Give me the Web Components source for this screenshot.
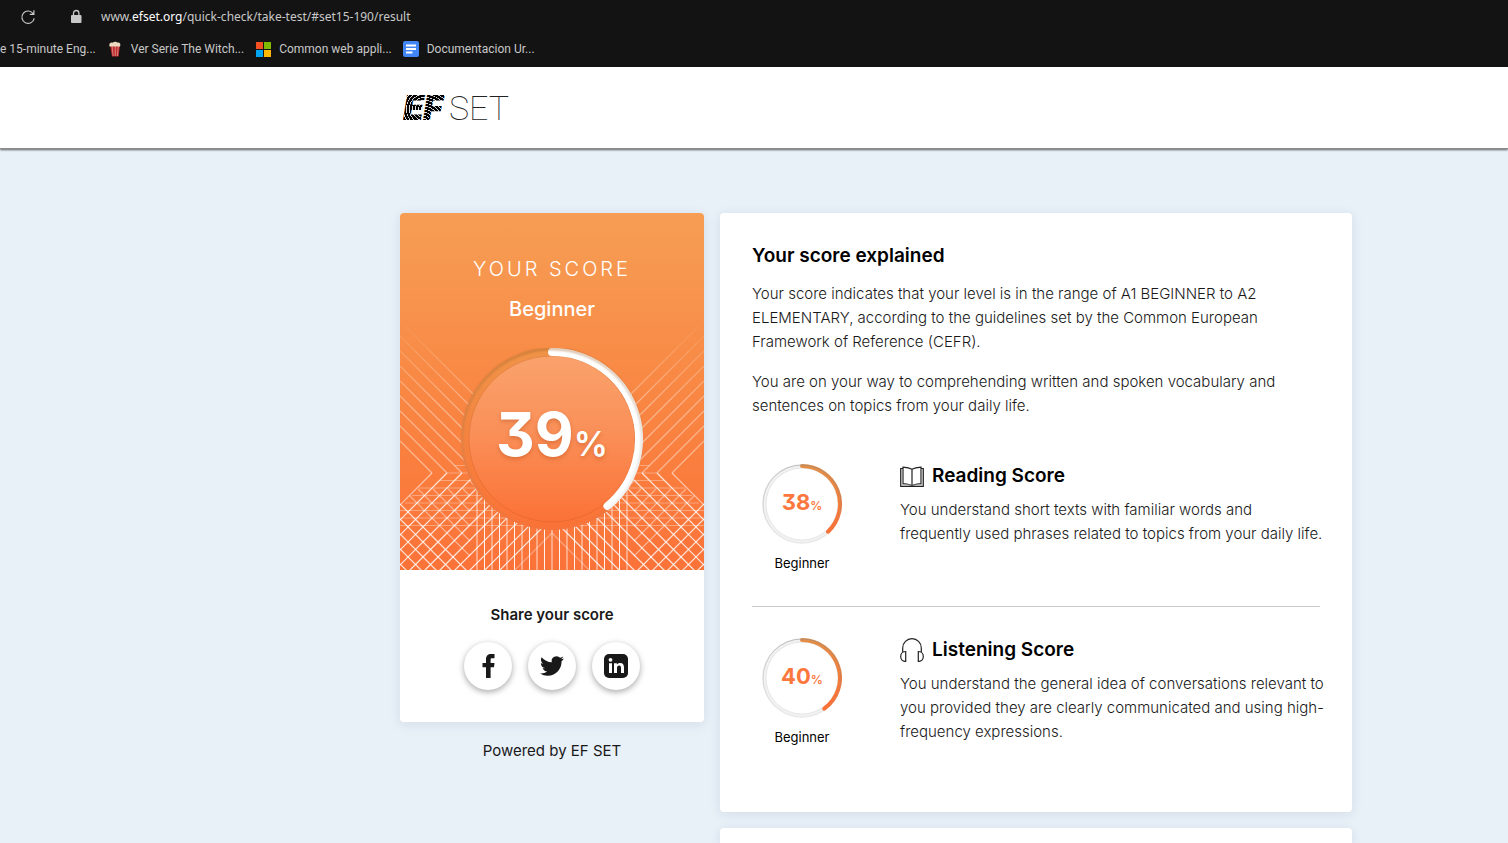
<!DOCTYPE html>
<html lang="en">
<head>
<meta charset="utf-8">
<title>EF SET Quick Check – Result</title>
<style>
  body { margin: 0; font-family: Inter, "Open Sans", sans-serif; font-size: 15px; line-height: 24px; color: #191919; }
</style>
</head>
<body>
<result-page></result-page>

<template id="browser-bar">
  <style>
    :host { display: block; background: #131313; color: #c8c8c8; font-size: 12px; overflow: hidden; }
    .address { display: flex; align-items: center; height: 33px; padding-left: 20px; font-family: "Noto Sans", sans-serif; }
    button { display: flex; padding: 0; border: 0; background: none; color: inherit; }
    .lock { margin: 0 17px 0 32px; }
    b { font-weight: 400; color: #fff; }
    nav { display: flex; align-items: center; gap: 11px; height: 32px; padding-bottom: 2px; font-family: Roboto, sans-serif; }
    a { display: flex; align-items: center; gap: 8px; color: inherit; text-decoration: none; white-space: nowrap; }
    svg { display: block; flex: none; }
  </style>
  <div class="address">
    <button aria-label="Reload"><svg width="16" height="16" viewBox="0 0 16 16" fill="none" stroke="#c8c8c8" stroke-width="1.2"><path d="M14.200 9.300A6.200 6.200 0 1 1 13.300 4.800M13.900 1.300v4H9.800"/></svg></button>
    <svg class="lock" width="16" height="16" viewBox="0 0 16 16"><rect x="3" y="6" width="10.500" height="8" rx="1" fill="#c8c8c8"/><path d="M5.500 7V4.200a2.700 2.700 0 0 1 5.400 0V7" fill="none" stroke="#c8c8c8" stroke-width="1.300"/></svg>
    <span>www.<b>efset.org</b>/quick-check/take-test/#set15-190/result</span>
  </div>
  <nav aria-label="Bookmarks">
    <a href="#test">e 15-minute Eng...</a>
    <a href="#serie"><svg width="16" height="16" viewBox="0 0 16 16"><path d="M3 4h10l-1.400 11.500H5z" fill="#c2282d"/><path d="M5 4l1.200 11M8.300 4v11M11.300 4l-.9 11" stroke="#d99c92" stroke-width=".8"/><path d="M2.500 5.500C1.500 2.500 4 1 5.500 1.800 7 .2 9.500.4 10.300 1.600 13 1 14 3.500 13 5.500z" fill="#ecd9bf"/></svg>Ver Serie The Witch...</a>
    <a href="#apps"><svg width="16" height="16" viewBox="0 0 16 16"><path d="M1 1h7v7H1z" fill="#f25022"/><path d="M9 1h7v7H9z" fill="#7fba00"/><path d="M1 9h7v7H1z" fill="#00a4ef"/><path d="M9 9h7v7H9z" fill="#ffb900"/></svg>Common web appli...</a>
    <a href="#docs"><svg width="16" height="16" viewBox="0 0 16 16"><rect width="16" height="16" rx="2" fill="#4285f4"/><path d="M3 4.500h10M3 8h10M3 11.500h6.500" stroke="#fff" stroke-width="1.800"/></svg>Documentacion Ur...</a>
  </nav>
</template>

<template id="site-header">
  <style>
    :host { display: grid; grid-template-columns: 400fr 952fr 156fr; height: 81px; align-items: center; background: #fff; border-bottom: 1px solid #8c8c8c; box-shadow: 0 1px 2px rgba(0,0,0,.6); position: relative; }
    a { grid-column: 2; display: block; width: 120px; color: #111; }
    svg { display: block; }
  </style>
  <a href="#home" aria-label="EF SET">
    <svg width="120" height="64" viewBox="0 -16 120 64">
      <defs>
        <radialGradient id="e" gradientUnits="userSpaceOnUse" cx="24" cy="17" r="3" spreadMethod="repeat"><stop offset=".72" stop-color="#000"/><stop offset=".8" stop-color="#ddd"/><stop offset="1" stop-color="#ddd"/></radialGradient>
        <radialGradient id="f" gradientUnits="userSpaceOnUse" cx="24" cy="29" r="3" spreadMethod="repeat"><stop offset=".72" stop-color="#000"/><stop offset=".8" stop-color="#ddd"/><stop offset="1" stop-color="#ddd"/></radialGradient>
      </defs>
      <text y="28" font-family="Inter" font-size="34" font-weight="900" font-style="italic"><tspan x="3" fill="url(#e)">E</tspan><tspan x="23" fill="url(#f)">F</tspan></text>
      <text x="49" y="28" font-family="Roboto" font-size="34" font-weight="100" fill="#222">SET</text>
    </svg>
  </a>
</template>

<template id="score-ring">
  <style>
    :host { display: grid; place-items: center; width: 80px; height: 80px; color: #fb773d; font-weight: 700; }
    :host > * { grid-area: 1 / 1; }
    svg { display: block; width: 100%; height: 100%; }
    p { margin: 0; font-size: 22px; line-height: 24px; font-feature-settings: "cv09"; }
    small { font-size: 12px; font-weight: 600; }
    :host([large]) { width: 182px; height: 182px; color: #fff; }
    :host([large]) p { font-size: 60px; line-height: 64px; text-shadow: 0 2px 4px rgba(160,60,10,.35); }
    :host([large]) small { font-size: 34px; }
  </style>
  <svg aria-hidden="true"></svg>
  <p><span></span><small>%</small></p>
</template>

<template id="share-button">
  <style>
    :host { display: block; }
    button { display: grid; place-items: center; width: 48px; height: 48px; padding: 0; border: 0; border-radius: 50%; background: #fff; color: #191919; box-shadow: 0 2px 6px rgba(0,0,0,.35); cursor: pointer; }
    ::slotted(svg) { display: block; }
  </style>
  <button><slot></slot></button>
</template>

<template id="score-card">
  <style>
    :host { display: block; text-align: center; }
    .card { border-radius: 4px; overflow: hidden; background: #fff; box-shadow: 0 2px 12px rgba(30,60,90,.1); }
    .top { display: grid; justify-items: center; background: linear-gradient(#f69e54, #f98542 55%, #fb7238); color: #fff; }
    .top > * { grid-area: 1 / 1; }
    .rays { width: 100%; height: 100%; display: block; }
    .content { display: grid; justify-items: center; padding: 40px 0; }
    h1 { margin: 0; font-size: 20px; line-height: 32px; font-weight: 300; letter-spacing: 3px; }
    h2 { margin: 8px 0 23px; font-size: 20px; line-height: 32px; font-weight: 500; }
    .share { padding: 33px 32px 32px; }
    h3 { margin: 0 0 15px; font-size: 15px; line-height: 24px; font-weight: 600; }
    .row { display: flex; justify-content: center; gap: 16px; }
    .powered { margin: 17px 0; }
  </style>
  <div class="card">
    <div class="top">
      <svg class="rays" viewBox="0 0 304 357" preserveAspectRatio="xMidYMax slice" aria-hidden="true"></svg>
      <div class="content">
        <h1>YOUR SCORE</h1>
        <h2>Beginner</h2>
        <score-ring large value="39"></score-ring>
      </div>
    </div>
    <div class="share">
      <h3>Share your score</h3>
      <div class="row">
        <share-button label="Facebook"><svg width="15" height="24" viewBox="0 0 15 24" fill="currentColor"><path d="M13.500 0v4.300H11c-1 0-1.400.5-1.400 1.400V9h3.900l-.5 4.200H9.600V24H5V13.200H1.500V9H5V5.300C5 1.900 7 0 10 0z"/></svg></share-button>
        <share-button label="Twitter"><svg width="24" height="24" viewBox="0 0 24 24" fill="currentColor"><path d="M23.953 4.570a10 10 0 01-2.825.775 4.958 4.958 0 002.163-2.723c-.951.555-2.005.959-3.127 1.184a4.920 4.920 0 00-8.384 4.482C7.690 8.095 4.067 6.130 1.640 3.162a4.822 4.822 0 00-.666 2.475c0 1.710.87 3.213 2.188 4.096a4.904 4.904 0 01-2.228-.616v.06a4.923 4.923 0 003.946 4.827 4.996 4.996 0 01-2.212.085 4.936 4.936 0 004.604 3.417 9.867 9.867 0 01-6.102 2.105c-.39 0-.779-.023-1.170-.067a13.995 13.995 0 007.557 2.209c9.053 0 13.998-7.496 13.998-13.985 0-.21 0-.42-.015-.63A9.935 9.935 0 0024 4.590z"/></svg></share-button>
        <share-button label="LinkedIn"><svg width="24" height="24" viewBox="0 0 24 24"><rect width="24" height="24" rx="5" fill="#191919"/><circle cx="6.500" cy="5.800" r="1.900" fill="#fff"/><path d="M5 9.200h3V19H5zM10 9.200h2.900v1.400c.6-1 1.700-1.700 3.200-1.700 2.900 0 3.900 1.800 3.900 4.600V19h-3v-4.900c0-1.500-.4-2.600-1.800-2.600-1.500 0-2.200 1.100-2.200 2.600V19h-3z" fill="#fff"/></svg></share-button>
      </div>
    </div>
  </div>
  <p class="powered">Powered by EF SET</p>
</template>

<template id="skill-score">
  <style>
    :host { display: grid; grid-template-columns: 100px 1fr; gap: 48px; padding: 30px 0 32px; }
    :host([divided]) { border-top: 1px solid #ccc; padding-top: 31px; }
    .gauge { display: grid; justify-items: center; align-content: start; gap: 8px; font-size: 13px; line-height: 22px; color: #000; }
    .text { margin-right: -6px; }
    h3 { display: flex; gap: 8px; margin: 0 0 10px; font-size: 19px; line-height: 24px; font-weight: 600; color: #000; }
    p { margin: 0; font-weight: 300; }
  </style>
  <div class="gauge"><score-ring></score-ring><span>Beginner</span></div>
  <div class="text">
    <h3><slot name="icon"></slot><slot name="title"></slot></h3>
    <p><slot></slot></p>
  </div>
</template>

<template id="result-page">
  <style>
    :host { display: flex; flex-direction: column; min-height: 100vh; background: #e8f0f8; }
    main { flex: 1; display: grid; grid-template-columns: 400fr 952fr 156fr; padding-top: 64px; }
    .columns { grid-column: 2; display: grid; grid-template-columns: 304px 1fr; gap: 16px; }
    .right { display: flex; flex-direction: column; gap: 16px; }
    section { padding: 32px; border-radius: 4px; background: #fff; box-shadow: 0 2px 12px rgba(30,60,90,.1); }
    .next { flex: 1; padding: 0; border-radius: 4px 4px 0 0; }
    h2 { margin: 0 0 16px; font-size: 19px; line-height: 21px; font-weight: 600; color: #000; }
    section > p { margin: 0 0 16px; font-weight: 300; }
    svg { display: block; flex: none; }
  </style>
  <browser-bar></browser-bar>
  <site-header></site-header>
  <main>
    <div class="columns">
      <score-card></score-card>
      <div class="right">
        <section>
          <h2>Your score explained</h2>
          <p>Your score indicates that your level is in the range of A1 BEGINNER to A2 ELEMENTARY, according to the guidelines set by the Common European Framework of Reference (CEFR).</p>
          <p>You are on your way to comprehending written and spoken vocabulary and sentences on topics from your daily life.</p>
          <skill-score value="38">
            <svg slot="icon" width="24" height="24" viewBox="0 0 24 24" fill="none" stroke="#222" stroke-width="1.200"><path d="M3 4.500H.7v17.800h22.600V4.500H21M12 5.300C9.500 4 6 3.400 3 3.100v16.600c3 .2 6.500.8 9 1.800 2.500-1 6-1.600 9-1.800V3.100c-3 .3-6.500.9-9 2.200zm0 0v16"/><path d="M1.800 5v16h20.400V5" stroke="#999" stroke-width=".8"/></svg>
            <span slot="title">Reading Score</span>
            You understand short texts with familiar words and frequently used phrases related to topics from your daily life.
          </skill-score>
          <skill-score divided value="40">
            <svg slot="icon" width="24" height="24" viewBox="0 0 24 24" fill="none" stroke="#222" stroke-width="1.200"><path d="M2.700 14.200V10a9.300 9.300 0 0 1 18.600 0v4.200M5.700 13.500v10C2.800 23.500.7 21.300.7 18.500s2.100-5 5-5zM18.300 13.500v10c2.900 0 5-2.200 5-5s-2.100-5-5-5z"/></svg>
            <span slot="title">Listening Score</span>
            You understand the general idea of conversations relevant to you provided they are clearly communicated and using high-frequency expressions.
          </skill-score>
        </section>
        <section class="next"></section>
      </div>
    </div>
  </main>
</template>

<script>
class TemplateElement extends HTMLElement {
  constructor() {
    super();
    this.attachShadow({ mode: 'open' }).append(document.getElementById(this.localName).content.cloneNode(true));
  }
}

class BrowserBar extends TemplateElement {}
class SiteHeader extends TemplateElement {}
class ResultPage extends TemplateElement {}

class ScoreRing extends TemplateElement {
  static observedAttributes = ['value'];
  connectedCallback() { this.draw(); }
  attributeChangedCallback() { this.draw(); }
  draw() {
    const value = Number(this.getAttribute('value') || 0);
    const large = this.hasAttribute('large');
    const c = large ? 91 : 40, w = large ? 8 : 4, r = c - w / 2;
    const a = value / 100 * 2 * Math.PI;
    const x = c + r * Math.sin(a), y = c - r * Math.cos(a);
    const face = large
      ? `<circle cx="${c}" cy="${c}" r="${c - w}" fill="url(#face)"/><circle cx="${c}" cy="${c}" r="83" fill="none" stroke="#b04a14" stroke-opacity=".22"/>`
      : `<circle cx="${c}" cy="${c}" r="${c - w}" fill="#fff" stroke="#e2e2e2" stroke-width=".8"/>`;
    this.shadowRoot.querySelector('span').textContent = value;
    this.shadowRoot.querySelector('svg').innerHTML = `
      <defs>
        <linearGradient id="track" x1="0" y1="0" x2="0" y2="1"><stop stop-color="#ef9448"/><stop offset="1" stop-color="#fb7236"/></linearGradient>
        <linearGradient id="face" x1="0" y1="0" x2="0" y2="1"><stop stop-color="#faa26c"/><stop offset=".45" stop-color="#fa9059"/><stop offset="1" stop-color="#fb7236"/></linearGradient>
        <linearGradient id="arc" gradientUnits="userSpaceOnUse" x1="0" y1="0" x2="0" y2="${c * 2}"><stop stop-color="#e28f47"/><stop offset=".8" stop-color="#fb7236"/></linearGradient>
        <linearGradient id="rim" x1="0" y1="0" x2="0" y2="1"><stop stop-color="${large ? '#9c5a20' : '#888'}" stop-opacity=".5"/><stop offset="1" stop-color="#888" stop-opacity=".08"/></linearGradient>
        <filter id="soft" x="-10%" y="-10%" width="120%" height="120%"><feGaussianBlur stdDeviation="1"/></filter>
      </defs>
      <circle cx="${c}" cy="${c}" r="${c}" fill="${large ? 'url(#track)' : '#f1f1f1'}"/>
      ${face}
      <path d="M${c} ${w / 2}A${r} ${r} 0 0 1 ${x} ${y}" fill="none" stroke="${large ? '#fff' : 'url(#arc)'}" stroke-width="${w}" stroke-linecap="round"/>
      <circle cx="${c}" cy="${c}" r="${c - 1}" fill="none" stroke="url(#rim)" stroke-width="${large ? 2 : 1}" ${large ? 'filter="url(#soft)"' : ''}/>`;
  }
}

class ShareButton extends TemplateElement {
  connectedCallback() {
    this.shadowRoot.querySelector('button').setAttribute('aria-label', 'Share on ' + this.getAttribute('label'));
  }
}

class SkillScore extends TemplateElement {
  connectedCallback() {
    this.shadowRoot.querySelector('score-ring').setAttribute('value', this.getAttribute('value'));
  }
}

class ScoreCard extends TemplateElement {
  connectedCallback() {
    const line = (x1, y1, x2, y2, o) => `<path d="M${x1} ${y1}L${x2} ${y2}" stroke-opacity="${o}"/>`;
    let half = '', grid = '';
    // chevrons: down to a tip at y = 260, then back out towards the corner
    for (let c = 108; c <= 228; c += 15) half += line(0, c, 260 - c, 260, .5);
    for (let d = 292; d <= 472; d += 15) {
      const x = Math.min(152, d - 260);
      half += line(x, d - x, d - 360, 360, d < 300 ? .6 : d > 460 ? .35 : .85);
    }
    // cross lines of the lattice
    for (let e = 198; e <= 273; e += 15) half += line(Math.max(276 - e, (292 - e) / 2), Math.max(276, (292 + e) / 2), 70, 70 + e, .45);
    for (let e = 291; e <= 351; e += 15) half += line(0, e, 360 - e, 360, .8);
    for (let i = 0; i < 9; i++) half += line(i < 3 ? 54 - i * 7 : Math.max(0, 40 - i * 7), 252.5 + i * 7.5, 152, 252.5 + i * 7.5, .35);
    for (let i = 0; i <= 20; i++) grid += `<path d="M${77 + i * 7.5} 262V360" stroke-width="${i % 2 ? 1 : 2}" stroke-opacity="${i % 2 ? .9 : .38}"/>`;
    this.shadowRoot.querySelector('.rays').innerHTML = `
      <defs>
        <linearGradient id="fade" gradientUnits="userSpaceOnUse" x1="0" y1="105" x2="0" y2="320"><stop stop-color="#000"/><stop offset=".4" stop-color="#ccc"/><stop offset="1" stop-color="#fff"/></linearGradient>
        <mask id="m" maskUnits="userSpaceOnUse" x="0" y="0" width="304" height="357"><rect width="304" height="357" fill="url(#fade)"/></mask>
      </defs>
      <g mask="url(#m)" fill="none" stroke="#fff" stroke-width="1.2"><g>${half}</g><g transform="translate(304 0) scale(-1 1)">${half}</g>${grid}</g>`;
  }
}

customElements.define('browser-bar', BrowserBar);
customElements.define('site-header', SiteHeader);
customElements.define('score-ring', ScoreRing);
customElements.define('share-button', ShareButton);
customElements.define('skill-score', SkillScore);
customElements.define('score-card', ScoreCard);
customElements.define('result-page', ResultPage);
</script>
</body>
</html>
